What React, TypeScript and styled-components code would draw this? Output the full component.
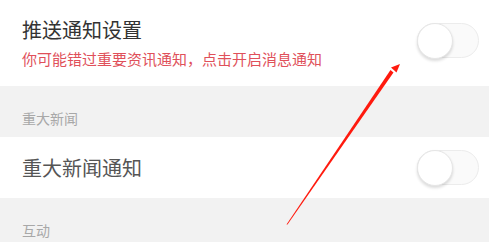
import { FC } from 'react';
import styled, { createGlobalStyle } from 'styled-components';

const GlobalStyle = createGlobalStyle`
  html, body {
    margin: 0;
    padding: 0;
    background: #f2f2f2;
  }
  body {
    font-family: 'Noto Sans CJK SC', 'Noto Sans', sans-serif;
  }
`;

const Page = styled.div`
  position: relative;
  width: 489px;
  height: 242px;
  overflow: hidden;
  background: #f2f2f2;
`;

const SettingRow = styled.div<{ h: number }>`
  display: flex;
  align-items: center;
  justify-content: space-between;
  height: ${({ h }) => `${h}px`};
  padding: 0 10px 0 22px;
  background: #fff;
  box-sizing: border-box;
`;

const TextCol = styled.div`
  display: flex;
  flex-direction: column;
  gap: 7px;
`;

const Title = styled.div<{ color?: string }>`
  font-size: 20px;
  line-height: 24px;
  color: ${({ color }) => color ?? '#333'};
`;

const Hint = styled.div`
  font-size: 15px;
  line-height: 20px;
  color: #e0505a;
`;

const GroupHeader = styled.div<{ h: number }>`
  height: ${({ h }) => `${h}px`};
  padding: 22px 22px 0;
  box-sizing: border-box;
  font-size: 14px;
  line-height: 20px;
  color: #a8a8a8;
`;

const Track = styled.div<{ lift?: number }>`
  position: relative;
  width: 62px;
  height: 35px;
  margin-bottom: ${({ lift }) => `${(lift ?? 0) * 2}px`};
  border-radius: 18px;
  background: #fafafa;
  border: 1px solid #ececec;
  box-sizing: border-box;
`;

const Knob = styled.div`
  position: absolute;
  left: -1px;
  top: -1px;
  width: 36px;
  height: 36px;
  border-radius: 50%;
  background: #fff;
  border: 1px solid #e6e6e6;
  box-sizing: border-box;
  box-shadow: 0 2px 3px rgba(0, 0, 0, 0.14);
`;

const Toggle: FC<{ lift?: number }> = ({ lift }) => (
  <Track lift={lift}>
    <Knob />
  </Track>
);

const Arrow = styled.svg`
  position: absolute;
  left: 0;
  top: 0;
  pointer-events: none;
`;

export default function App() {
  return (
    <>
      <GlobalStyle />
      <Page>
        <SettingRow h={86}>
          <TextCol>
            <Title>推送通知设置</Title>
            <Hint>你可能错过重要资讯通知，点击开启消息通知</Hint>
          </TextCol>
          <Toggle lift={3} />
        </SettingRow>
        <GroupHeader h={51}>重大新闻</GroupHeader>
        <SettingRow h={61}>
          <Title color="#555">重大新闻通知</Title>
          <Toggle />
        </SettingRow>
        <GroupHeader h={44}>互动</GroupHeader>
        <Arrow width="489" height="242" viewBox="0 0 489 242">
          <polygon points="286.5,224.5 287.5,224.5 393.5,72.5 390.5,70" fill="#ff1a0e" />
          <polygon points="400,64 391,67.5 396.5,72.5" fill="#ff1a0e" />
        </Arrow>
      </Page>
    </>
  );
}
